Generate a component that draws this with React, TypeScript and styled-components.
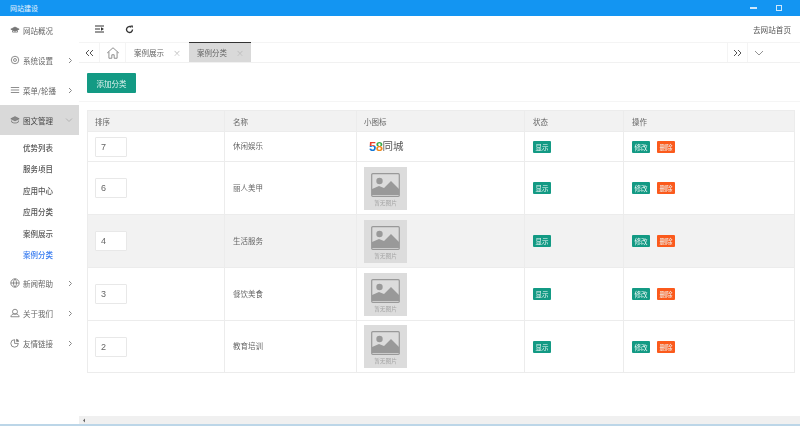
import React from "react";
import styled, { createGlobalStyle } from "styled-components";

const Global = createGlobalStyle`
  html, body { margin: 0; padding: 0; background: #fff; }
  body { font-family: "Noto Sans CJK SC", "Liberation Sans", sans-serif; overflow: hidden; }
  * { box-sizing: border-box; }
`;

const Page = styled.div`
  width: 800px; height: 426px; display: flex; flex-direction: column; overflow: hidden;
  border-bottom: 2px solid #bcd6e8; filter: blur(0.3px);
`;
const TitleBar = styled.header`
  height: 16px; flex: none; background: #1395f2; color: #e6f3fd; font-size: 7px;
  display: flex; align-items: center; justify-content: space-between; padding: 0 18px 0 10px;
`;
const WinButtons = styled.div`display: flex; align-items: center; gap: 19px;`;
const MinBtn = styled.span`width: 7.5px; height: 1.5px; background: #cfe8fb;`;
const MaxBtn = styled.span`width: 6px; height: 6px; border: 1px solid #cfe8fb;`;

const Body = styled.div`flex: 1; display: flex; min-height: 0;`;
const Side = styled.nav`
  width: 79px; flex: none; display: flex; flex-direction: column; margin-top: -1px; color: #666; font-size: 7.5px;
`;
const MenuItem = styled.div<{ $active?: boolean }>`
  height: 30px; display: flex; align-items: center; padding: 0 6px 0 10px; gap: 3px;
  background: ${p => (p.$active ? "#d9d9d9" : "transparent")};
  color: ${p => (p.$active ? "#444" : "#666")};
  svg { flex: none; }
`;
const MenuLabel = styled.span`flex: 1; white-space: nowrap;`;
const SubList = styled.div`display: flex; flex-direction: column; padding: 2px 0 3px;`;
const SubItem = styled.div<{ $active?: boolean }>`
  height: 21.4px; line-height: 21.4px; padding-left: 23px; font-weight: 500;
  color: ${p => (p.$active ? "#3a7df0" : "#555")};
`;

const Main = styled.main`flex: 1; min-width: 0; display: flex; flex-direction: column; position: relative;`;
const Toolbar = styled.div`
  height: 26px; flex: none; display: flex; align-items: center; padding: 0 9px 0 16px; gap: 21px;
`;
const Home = styled.span`margin-left: auto; font-size: 7.6px; color: #555;`;
const TabBar = styled.div`
  height: 21px; flex: none; display: flex; align-items: stretch; border-top: 1px solid #f4f4f4;
  border-bottom: 1px solid #f1f1f1; font-size: 7.5px; color: #666;
`;
const IconCell = styled.div<{ $w: number }>`
  width: ${p => p.$w}px; flex: none; display: flex; align-items: center; justify-content: center;
  border-right: 1px solid #f4f4f4;
`;
const EdgeCell = styled.div`
  width: 21px; flex: none; display: flex; align-items: center; justify-content: center;
  border-left: 1px solid #f4f4f4; border-right: 1px solid #f4f4f4;
`;
const DropCell = styled.div`
  width: 52px; flex: none; display: flex; align-items: center; padding-left: 6px;
`;
const Tab = styled.div<{ $active?: boolean }>`
  width: ${p => (p.$active ? 62 : 63)}px; flex: none; display: flex; align-items: center; padding-left: 8px; gap: 9px;
  background: ${p => (p.$active ? "#d9d9d9" : "transparent")};
  border-top: ${p => (p.$active ? "1px solid #333" : "none")};
  margin-top: ${p => (p.$active ? "-1px" : "0")};
  i { font-style: normal; color: #bbb; font-size: 8px; }
`;
const TabSpacer = styled.div`flex: 1;`;
const Content = styled.div`flex: 1; padding: 10px 5px 0 8px; min-height: 0;`;
const AddButton = styled.button`
  display: block; width: 49px; height: 20px; border: 0; border-radius: 1px; padding: 0; background: #139a84; color: #dff3ef;
  font: inherit; font-size: 7.5px;
`;
const Divider = styled.div`height: 1px; background: #f5f5f5; margin: 8px -5px 8px -8px;`;
const Table = styled.table`
  width: 708px; table-layout: fixed; border-collapse: collapse; font-size: 7.5px; color: #666;
  th, td { border: 1px solid #ececec; padding: 0 0 0 7px; text-align: left; font-weight: 400; }
  th:nth-child(2), td:nth-child(2), th:nth-child(4), td:nth-child(4), th:nth-child(5), td:nth-child(5) { padding-left: 8px; }
  td:nth-child(2) { padding-bottom: 2px; }
`;
const Col = styled.col<{ $w: number }>`width: ${p => p.$w}px;`;
const Head = styled.tr`height: 21px; background: #f2f2f2;`;
const Row = styled.tr<{ $h: number; $hl?: boolean }>`
  height: ${p => p.$h}px; background: ${p => (p.$hl ? "#f2f2f2" : "#fff")};
`;
const SortInput = styled.div`
  width: 32px; height: 20px; border: 1px solid #e8e8e8; border-radius: 1px; background: #fff; color: #666;
  font-family: "Liberation Sans", sans-serif; font-size: 9px; line-height: 18px; padding-left: 5px;
`;
const Placeholder = styled.div`
  width: 43px; height: 43px; background: #dcdcdc; display: flex; flex-direction: column; align-items: center;
  padding-top: 6px; color: #a5a5a5; font-size: 5.7px; line-height: 7px; gap: 2px;
`;
const Logo = styled.div`display: flex; align-items: center; padding-left: 5px; font-size: 10.5px; color: #555; line-height: 1;`;
const LogoNum = styled.span<{ $top: string; $bottom: string }>`
  font-family: "Liberation Sans", sans-serif; font-weight: 700; font-size: 13px; margin-right: -0.5px;
  background: linear-gradient(180deg, ${p => p.$top} 0 50%, ${p => p.$bottom} 50%);
  -webkit-background-clip: text; background-clip: text; color: transparent;
`;
const Badge = styled.span<{ $c: string }>`
  display: inline-block; width: 18px; height: 12px; line-height: 12px; text-align: center; border-radius: 1px;
  background: ${p => p.$c}; color: #eef8f6; font-size: 6.5px; vertical-align: middle;
`;
const Actions = styled.div`display: flex; gap: 7px;`;
const ScrollBar = styled.div`
  position: absolute; left: 0; right: 0; bottom: 0; height: 8px; background: #f0f0f0; display: flex; align-items: center; padding-left: 3px;
`;

const I = { width: 10, height: 10, viewBox: "0 0 24 24", fill: "none", stroke: "#777", strokeWidth: 2 } as const;
const Chevron = () => (
  <svg width="6" height="7" viewBox="0 0 6 7" fill="none" stroke="#888" strokeWidth="1"><path d="M2 1l2.5 2.5L2 6" /></svg>
);
const ChevronDown = () => (
  <svg width="8" height="6" viewBox="0 0 8 6" fill="none" stroke="#aaa" strokeWidth="0.8"><path d="M1 1.5l3 3 3-3" /></svg>
);
const menuIcons = {
  hat: <svg {...I}><path d="M2 10l10-5 10 5-10 5z" fill="#777" /><path d="M6 13v4h12v-4" /></svg>,
  gear: <svg {...I}><circle cx="12" cy="12" r="9" /><circle cx="12" cy="12" r="3.5" /></svg>,
  list: <svg {...I}><path d="M2 6h20M2 12h20M2 18h20" /></svg>,
  stack: <svg {...I}><path d="M2 9l10-5 10 5-10 5z" fill="#888" /><path d="M4 13v4c3 3 13 3 16 0v-4" /></svg>,
  globe: <svg {...I}><circle cx="12" cy="12" r="10" /><path d="M2 12h20M12 2c-5 6-5 14 0 20M12 2c5 6 5 14 0 20" /></svg>,
  users: <svg {...I}><circle cx="12" cy="9" r="6" /><path d="M2 21c1-5 4-7 10-7s9 2 10 7z" /></svg>,
  pie: <svg {...I}><path d="M11 4a9 9 0 1 0 9 9h-9z" /><path d="M15 2a8 8 0 0 1 7 7h-7z" fill="#777" stroke="none" /></svg>,
};

const ImagePh = () => (
  <Placeholder>
    <svg width="29" height="24" viewBox="0 0 29 24">
      <rect x="0.7" y="0.7" width="27.6" height="22.6" rx="1" fill="#dcdcdc" stroke="#999" strokeWidth="1.2" />
      <circle cx="8.5" cy="8" r="3.2" fill="#999" />
      <path d="M1 22v-6l7-3 5 2 7-7 8 8v6z" fill="#999" />
    </svg>
    <span>暂无图片</span>
  </Placeholder>
);

const rows = [
  { n: "7", name: "休闲娱乐", h: 30, logo: true },
  { n: "6", name: "丽人美甲", h: 53 },
  { n: "4", name: "生活服务", h: 53, hl: true },
  { n: "3", name: "餐饮美食", h: 53 },
  { n: "2", name: "教育培训", h: 52 },
];

export default function App() {
  return (
    <Page>
      <Global />
      <TitleBar>
        <span>网站建设</span>
        <WinButtons><MinBtn /><MaxBtn /></WinButtons>
      </TitleBar>
      <Body>
        <Side>
          <MenuItem>{menuIcons.hat}<MenuLabel>网站概况</MenuLabel></MenuItem>
          <MenuItem>{menuIcons.gear}<MenuLabel>系统设置</MenuLabel><Chevron /></MenuItem>
          <MenuItem>{menuIcons.list}<MenuLabel>菜单/轮播</MenuLabel><Chevron /></MenuItem>
          <MenuItem $active>{menuIcons.stack}<MenuLabel>图文管理</MenuLabel><ChevronDown /></MenuItem>
          <SubList>
            <SubItem>优势列表</SubItem>
            <SubItem>服务项目</SubItem>
            <SubItem>应用中心</SubItem>
            <SubItem>应用分类</SubItem>
            <SubItem>案例展示</SubItem>
            <SubItem $active>案例分类</SubItem>
          </SubList>
          <MenuItem>{menuIcons.globe}<MenuLabel>新闻帮助</MenuLabel><Chevron /></MenuItem>
          <MenuItem>{menuIcons.users}<MenuLabel>关于我们</MenuLabel><Chevron /></MenuItem>
          <MenuItem>{menuIcons.pie}<MenuLabel>友情链接</MenuLabel><Chevron /></MenuItem>
        </Side>
        <Main>
          <Toolbar>
            <svg width="9" height="8" viewBox="0 0 9 8" fill="none" stroke="#333" strokeWidth="1.2"><path d="M0 1h9M0 4h5M0 7h9" /><path d="M6 2.2L9 4 6 5.8z" fill="#333" stroke="none" /></svg>
            <svg width="9" height="9" viewBox="0 0 24 24" fill="none" stroke="#333" strokeWidth="3.6"><path d="M20 12a8 8 0 1 1-3-6.2" /><path d="M14 1h7v7z" fill="#333" stroke="none" /></svg>
            <Home>去网站首页</Home>
          </Toolbar>
          <TabBar>
            <IconCell $w={21}>
              <svg width="9" height="8" viewBox="0 0 9 8" fill="none" stroke="#555" strokeWidth="1"><path d="M4 1L1 4l3 3M8 1L5 4l3 3" /></svg>
            </IconCell>
            <IconCell $w={26}>
              <svg width="14" height="14" viewBox="0 0 24 24" fill="none" stroke="#777" strokeWidth="1.4"><path d="M2 12L12 3l10 9M5 10v11h5v-6h4v6h5V10" /></svg>
            </IconCell>
            <Tab>案例展示<i>×</i></Tab>
            <Tab $active>案例分类<i>×</i></Tab>
            <TabSpacer />
            <EdgeCell>
              <svg width="9" height="8" viewBox="0 0 9 8" fill="none" stroke="#555" strokeWidth="1"><path d="M1 1l3 3-3 3M5 1l3 3-3 3" /></svg>
            </EdgeCell>
            <DropCell>
              <svg width="10" height="6" viewBox="0 0 10 6" fill="none" stroke="#777" strokeWidth="0.8"><path d="M1 1l4 4 4-4" /></svg>
            </DropCell>
          </TabBar>
          <Content>
            <AddButton>添加分类</AddButton>
            <Divider />
            <Table>
              <colgroup>
                <Col $w={137} /><Col $w={132} /><Col $w={168} /><Col $w={99} /><col />
              </colgroup>
              <thead>
                <Head><th>排序</th><th>名称</th><th>小图标</th><th>状态</th><th>操作</th></Head>
              </thead>
              <tbody>
                {rows.map(r => (
                  <Row key={r.n} $h={r.h} $hl={r.hl}>
                    <td><SortInput>{r.n}</SortInput></td>
                    <td>{r.name}</td>
                    <td>{r.logo ? <Logo><LogoNum $top="#e8402a" $bottom="#1277d8">5</LogoNum><LogoNum $top="#3aa845" $bottom="#f08a1d">8</LogoNum>同城</Logo> : <ImagePh />}</td>
                    <td><Badge $c="#139a84">显示</Badge></td>
                    <td><Actions><Badge $c="#139a84">修改</Badge><Badge $c="#fb5a1c">删除</Badge></Actions></td>
                  </Row>
                ))}
              </tbody>
            </Table>
          </Content>
          <ScrollBar>
            <svg width="4" height="5" viewBox="0 0 4 5"><path d="M3 0.5L1 2.5l2 2z" fill="#666" /></svg>
          </ScrollBar>
        </Main>
      </Body>
    </Page>
  );
}
